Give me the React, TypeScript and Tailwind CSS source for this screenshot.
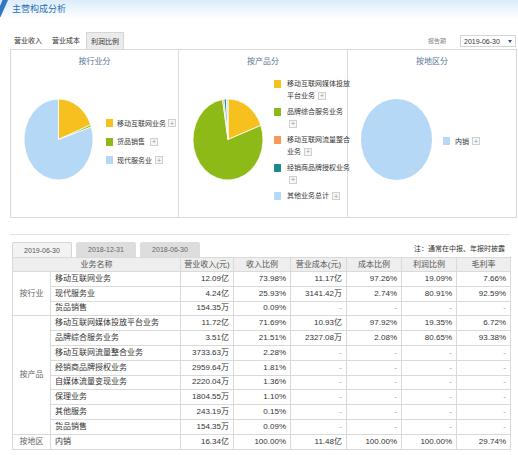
import React from "react";

const CN = { fontFamily: '"Liberation Sans", "Noto Sans CJK SC", sans-serif' };

type Slice = { from: number; to: number; color: string };

function slicePath(a0: number, a1: number) {
    const p = (a: number) => {
        const t = a * Math.PI * 2;
        return `${50 + 50 * Math.sin(t)},${50 - 50 * Math.cos(t)}`;
    };
    const large = a1 - a0 > 0.5 ? 1 : 0;
    return `M50,50 L${p(a0)} A50,50 0 ${large} 1 ${p(a1)} Z`;
}

function Pie({ slices, className }: { slices: Slice[]; className: string }) {
    return (
        <svg viewBox="0 0 100 100" preserveAspectRatio="none" className={className}>
            {slices.map((s, i) =>
                s.to - s.from >= 1 ? (
                    <ellipse key={i} cx="50" cy="50" rx="50" ry="50" fill={s.color} />
                ) : (
                    <path
                        key={i}
                        d={slicePath(s.from, s.to)}
                        fill={s.color}
                        stroke="#fff"
                        strokeWidth="0.8"
                        vectorEffect="non-scaling-stroke"
                    />
                )
            )}
        </svg>
    );
}

function PlusBox({ className = "" }: { className?: string }) {
    return (
        <span
            className={`inline-flex w-[8px] h-[8px] items-center justify-center border border-[#cfcfcf] bg-[#f6f6f6] text-[7px] leading-none text-[#999] align-middle ${className}`}
        >
            +
        </span>
    );
}

const YELLOW = "#f6c01e";
const GREEN = "#8dba17";
const BLUE = "#b4d8f6";
const ORANGE = "#f8975a";
const TEAL = "#1a8a8c";

const rows = [
    { cat: "按行业", span: 3, name: "移动互联网业务", v: ["12.09亿", "73.98%", "11.17亿", "97.26%", "19.09%", "7.66%"] },
    { name: "现代服务业", v: ["4.24亿", "25.93%", "3141.42万", "2.74%", "80.91%", "92.59%"] },
    { name: "货品销售", v: ["154.35万", "0.09%", "-", "-", "-", "-"] },
    { cat: "按产品", span: 8, name: "移动互联网媒体投放平台业务", v: ["11.72亿", "71.69%", "10.93亿", "97.92%", "19.35%", "6.72%"] },
    { name: "品牌综合服务业务", v: ["3.51亿", "21.51%", "2327.08万", "2.08%", "80.65%", "93.38%"] },
    { name: "移动互联网流量整合业务", v: ["3733.63万", "2.28%", "-", "-", "-", "-"] },
    { name: "经销商品牌授权业务", v: ["2959.64万", "1.81%", "-", "-", "-", "-"] },
    { name: "自媒体流量变现业务", v: ["2220.04万", "1.36%", "-", "-", "-", "-"] },
    { name: "保理业务", v: ["1804.55万", "1.10%", "-", "-", "-", "-"] },
    { name: "其他服务", v: ["243.19万", "0.15%", "-", "-", "-", "-"] },
    { name: "货品销售", v: ["154.35万", "0.09%", "-", "-", "-", "-"] },
    { cat: "按地区", span: 1, name: "内销", v: ["16.34亿", "100.00%", "11.48亿", "100.00%", "100.00%", "29.74%"] },
];

export default function App() {
    return (
        <div className="w-[518px] h-[455px] bg-white overflow-hidden text-[#333]" style={CN}>
            {/* title bar */}
            <div className="h-[19px] flex items-center bg-gradient-to-b from-[#dcecf9] to-white">
                <svg width="8" height="19" viewBox="0 0 8 19" className="shrink-0">
                    <polygon points="2.5,0 8,0 0.5,17 0,17 0,6" fill="#2f76c4" />
                </svg>
                <span className="ml-[4px] text-[9px] leading-none text-[#2c6db5]">主营构成分析</span>
            </div>

            {/* tabs */}
            <div className="mt-[13px] h-[17px] flex items-end">
                <div className="flex items-end text-[7px] leading-none text-[#333]">
                    <span className="ml-[14px] h-[17px] flex items-center">营业收入</span>
                    <span className="ml-[10px] h-[17px] flex items-center">营业成本</span>
                    <span className="ml-[6px] w-[38px] h-[17px] flex items-center justify-center bg-[#ebebeb] border border-b-0 border-[#d6d6d6]">
                        利润比例
                    </span>
                </div>
                <div className="ml-auto mr-[2px] mb-[2px] flex items-center">
                    <span className="text-[6px] leading-none text-[#888]">报告期</span>
                    <div className="ml-[14px] w-[56px] h-[12px] border border-[#d4d4d4] flex items-center">
                        <span className="ml-[3px] text-[7px] leading-none text-[#333]">2019-06-30</span>
                        <span className="ml-auto mr-[3px] w-0 h-0 border-l-[2px] border-r-[2px] border-t-[3px] border-l-transparent border-r-transparent border-t-[#34567e]" />
                    </div>
                </div>
            </div>

            {/* charts panel */}
            <div className="ml-[10px] w-[507px] h-[169px] border border-[#d9d9d9] flex">
                {/* by industry */}
                <div className="w-[168px] border-r border-[#dcdcdc] flex flex-col">
                    <div className="h-[24px] flex items-center justify-center text-[8px] leading-none text-[#5d7594]">按行业分</div>
                    <div className="flex items-start">
                        <Pie
                            className="ml-[13px] mt-[25px] w-[69px] h-[81px]"
                            slices={[
                                { from: 0, to: 0.1909, color: YELLOW },
                                { from: 0.1909, to: 0.2, color: GREEN },
                                { from: 0.2, to: 1, color: BLUE },
                            ]}
                        />
                        <div className="ml-[13px] mt-[44px] flex flex-col gap-[8.5px] text-[7px] leading-none">
                            <div className="h-[10px] flex items-center">
                                <span className="w-[7px] h-[8px]" style={{ background: YELLOW }} />
                                <span className="ml-[4px]">移动互联网业务</span>
                                <PlusBox className="ml-[2px]" />
                            </div>
                            <div className="h-[10px] flex items-center">
                                <span className="w-[7px] h-[8px]" style={{ background: GREEN }} />
                                <span className="ml-[4px]">货品销售</span>
                                <PlusBox className="ml-[5px]" />
                            </div>
                            <div className="h-[10px] flex items-center">
                                <span className="w-[7px] h-[8px]" style={{ background: BLUE }} />
                                <span className="ml-[4px]">现代服务业</span>
                                <PlusBox className="ml-[3px]" />
                            </div>
                        </div>
                    </div>
                </div>

                {/* by product */}
                <div className="w-[169px] border-r border-[#dcdcdc] flex flex-col">
                    <div className="h-[24px] flex items-center justify-center text-[8px] leading-none text-[#5d7594]">按产品分</div>
                    <div className="flex items-start">
                        <Pie
                            className="ml-[14px] mt-[25px] w-[70px] h-[81px] shrink-0"
                            slices={[
                                { from: 0, to: 0.1935, color: YELLOW },
                                { from: 0.1935, to: 0.975, color: GREEN },
                                { from: 0.975, to: 0.982, color: ORANGE },
                                { from: 0.982, to: 0.993, color: TEAL },
                                { from: 0.993, to: 1, color: BLUE },
                            ]}
                        />
                        <div className="ml-[11px] mt-[4px] flex flex-col gap-[5px] text-[7px] leading-[11.5px] whitespace-nowrap">
                            <div className="flex items-start">
                                <span className="w-[7px] h-[8px] mt-[2px] shrink-0" style={{ background: YELLOW }} />
                                <div className="ml-[6px]">
                                    移动互联网媒体投放
                                    <br />
                                    平台业务 <PlusBox className="ml-[1px]" />
                                </div>
                            </div>
                            <div className="flex items-start">
                                <span className="w-[7px] h-[8px] mt-[2px] shrink-0" style={{ background: GREEN }} />
                                <div className="ml-[6px]">
                                    品牌综合服务业务
                                    <br />
                                    <PlusBox className="ml-[2px]" />
                                </div>
                            </div>
                            <div className="flex items-start">
                                <span className="w-[7px] h-[8px] mt-[2px] shrink-0" style={{ background: ORANGE }} />
                                <div className="ml-[6px]">
                                    移动互联网流量整合
                                    <br />
                                    业务 <PlusBox className="ml-[1px]" />
                                </div>
                            </div>
                            <div className="flex items-start">
                                <span className="w-[7px] h-[8px] mt-[2px] shrink-0" style={{ background: TEAL }} />
                                <div className="ml-[6px]">
                                    经销商品牌授权业务
                                    <br />
                                    <PlusBox className="ml-[2px]" />
                                </div>
                            </div>
                            <div className="flex items-start">
                                <span className="w-[7px] h-[8px] mt-[2px] shrink-0" style={{ background: BLUE }} />
                                <div className="ml-[6px]">
                                    其他业务总计 <PlusBox className="ml-[1px]" />
                                </div>
                            </div>
                        </div>
                    </div>
                </div>

                {/* by region */}
                <div className="flex-1 flex flex-col">
                    <div className="h-[24px] flex items-center justify-center text-[8px] leading-none text-[#5d7594]">按地区分</div>
                    <div className="flex items-start">
                        <Pie className="ml-[13px] mt-[25px] w-[71px] h-[81px]" slices={[{ from: 0, to: 1, color: BLUE }]} />
                        <div className="ml-[11px] mt-[62px] h-[10px] flex items-center text-[7px] leading-none">
                            <span className="w-[7px] h-[8px]" style={{ background: BLUE }} />
                            <span className="ml-[5px]">内销</span>
                            <PlusBox className="ml-[3px]" />
                        </div>
                    </div>
                </div>
            </div>

            <div className="ml-[10px] mt-[16px] w-[500px] h-px bg-[#e2e2e2]" />

            {/* period tabs */}
            <div className="mt-[7px] ml-[12px] w-[493px] h-[15px] flex items-end">
                <div className="w-[60px] h-[15px] flex items-center justify-center bg-[#f3f3f3] border border-b-0 border-[#d6d6d6] rounded-t-[2px] text-[7px] leading-none text-[#555]">
                    2019-06-30
                </div>
                <div className="ml-[4px] w-[60px] h-[15px] flex items-center justify-center bg-[#dddddd] rounded-t-[2px] text-[7px] leading-none text-[#666]">
                    2018-12-31
                </div>
                <div className="ml-[4px] w-[60px] h-[15px] flex items-center justify-center bg-[#dddddd] rounded-t-[2px] text-[7px] leading-none text-[#666]">
                    2018-06-30
                </div>
                <span className="ml-auto mb-[5px] text-[7px] leading-none text-[#333]">注：通常在中报、年报时披露</span>
            </div>

            {/* table */}
            <table className="ml-[12px] w-[498px] table-fixed border-collapse text-[8px] leading-none">
                <colgroup>
                    <col className="w-[38px]" />
                    <col className="w-[130px]" />
                    <col className="w-[53px]" />
                    <col className="w-[57px]" />
                    <col className="w-[56px]" />
                    <col className="w-[55px]" />
                    <col className="w-[55px]" />
                    <col className="w-[54px]" />
                </colgroup>
                <thead>
                    <tr className="h-[14px] bg-[#eeeeee] text-[#555]">
                        <th colSpan={2} className="font-normal border border-[#dadada] p-0">业务名称</th>
                        <th className="font-normal border border-[#dadada] p-0">营业收入(元)</th>
                        <th className="font-normal border border-[#dadada] p-0">收入比例</th>
                        <th className="font-normal border border-[#dadada] p-0">营业成本(元)</th>
                        <th className="font-normal border border-[#dadada] p-0">成本比例</th>
                        <th className="font-normal border border-[#dadada] p-0">利润比例</th>
                        <th className="font-normal border border-[#dadada] p-0">毛利率</th>
                    </tr>
                </thead>
                <tbody>
                    {rows.map((r, i) => (
                        <tr key={i} className="h-[14.8px]">
                            {r.cat && (
                                <td rowSpan={r.span} className="border border-[#dadada] p-0 text-center text-[#666]">
                                    {r.cat}
                                </td>
                            )}
                            <td className="border border-[#dadada] py-0 px-[4px] text-left whitespace-nowrap">{r.name}</td>
                            {r.v.map((v, j) => (
                                <td
                                    key={j}
                                    className={`border border-[#dadada] py-0 px-[4px] text-right ${v === "-" ? "text-[#999]" : ""}`}
                                >
                                    {v}
                                </td>
                            ))}
                        </tr>
                    ))}
                </tbody>
            </table>
        </div>
    );
}
